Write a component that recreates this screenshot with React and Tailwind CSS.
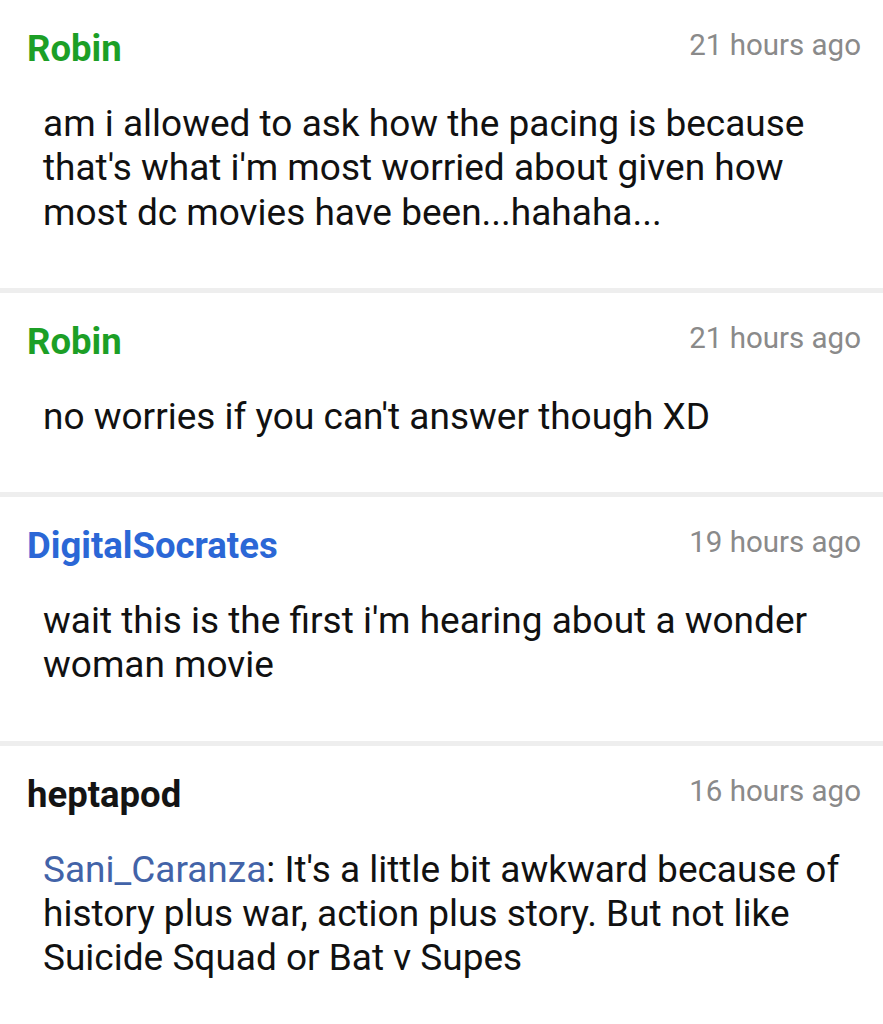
export default function App() {
  const comments = [
    {
      name: "Robin",
      color: "text-[#1c9f26]",
      time: "21 hours ago",
      body: <>am i allowed to ask how the pacing is because that's what i'm most worried about given how most dc movies have been...hahaha...</>,
    },
    {
      name: "Robin",
      color: "text-[#1c9f26]",
      time: "21 hours ago",
      body: <>no worries if you can't answer though XD</>,
    },
    {
      name: "DigitalSocrates",
      color: "text-[#2b67d6]",
      time: "19 hours ago",
      body: <>wait this is the first i'm hearing about a wonder woman movie</>,
    },
    {
      name: "heptapod",
      color: "text-[#141414]",
      time: "16 hours ago",
      body: (
        <>
          <span className="text-[#4263a8]">Sani_Caranza</span>: It's a little bit awkward because of history plus war, action plus story. But not like Suicide Squad or Bat v Supes
        </>
      ),
    },
  ];
  return (
    <div className="w-[883px] h-[1024px] overflow-hidden bg-white font-['Roboto',sans-serif]">
      {comments.map((c, i) => (
        <div key={i}>
          {i > 0 && <div className="h-[5px] bg-[#eeeeee]" />}
          <div className="pt-[29px] pb-[53px] pl-[27px] pr-[22px]">
            <div className="flex justify-between items-start">
              <div className={`text-[36.5px] leading-[40px] font-bold ${c.color}`}>{c.name}</div>
              <div className="text-[29.5px] leading-[32px] text-[#8a8a8a]">{c.time}</div>
            </div>
            <div className="mt-[33px] pl-[16px] pr-[20px] text-[37px] leading-[44.3px] text-[#111111]">
              {c.body}
            </div>
          </div>
        </div>
      ))}
    </div>
  );
}
